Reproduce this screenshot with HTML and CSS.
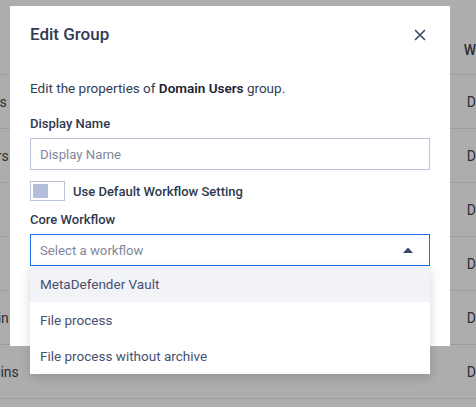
FILE: index.html
```html
<!DOCTYPE html>
<html>
<head>
<meta charset="utf-8">
<link rel="stylesheet" href="styles.css">
</head>
<body>
<div class="page">
  <div class="table">
    <div class="row head">
      <div class="c1"></div>
      <div class="c2">W</div>
    </div>
    <div class="row"><div class="c1 e1">Domain Users</div><div class="c2">D</div></div>
    <div class="row"><div class="c1 e2">Administrators</div><div class="c2">D</div></div>
    <div class="row"><div class="c1"></div><div class="c2">D</div></div>
    <div class="row"><div class="c1"></div><div class="c2">D</div></div>
    <div class="row"><div class="c1 e2">Domain Admin</div><div class="c2">D</div></div>
    <div class="row"><div class="c1 e3">Enterprise Admins</div><div class="c2">D</div></div>
  </div>

  <div class="modal">
    <div class="modal-header">
      <h2 class="title">Edit Group</h2>
      <svg class="close" width="12" height="12" viewBox="0 0 12 12"><path d="M1.5 1.5 L10.5 10.5 M10.5 1.5 L1.5 10.5" stroke="#3b4765" stroke-width="1.6" stroke-linecap="round"/></svg>
    </div>
    <div class="modal-body">
      <p class="intro">Edit the properties of <strong>Domain Users</strong> group.</p>
      <label class="label">Display Name</label>
      <div class="input"><span class="placeholder">Display Name</span></div>
      <div class="toggle-row">
        <span class="toggle"><span class="knob"></span></span>
        <span class="toggle-text">Use Default Workflow Setting</span>
      </div>
      <label class="label label-core">Core Workflow</label>
      <div class="select-wrap">
        <div class="select">
          <span class="placeholder">Select a workflow</span>
          <svg class="caret" width="10" height="6" viewBox="0 0 10 6"><path d="M0 6 L5 0.5 L10 6 Z" fill="#3a4766"/></svg>
        </div>
        <div class="dropdown">
          <div class="item active">MetaDefender Vault</div>
          <div class="item">File process</div>
          <div class="item">File process without archive</div>
        </div>
      </div>
    </div>
  </div>
</div>
</body>
</html>
```

FILE: styles.css
```css
* { box-sizing: border-box; }
html, body { margin: 0; padding: 0; }
body {
  width: 476px;
  height: 407px;
  overflow: hidden;
  background: #adadad;
  font-family: Roboto, "Liberation Sans", sans-serif;
}
.page {
  position: relative;
  width: 476px;
  height: 407px;
}
.table {
  display: flex;
  flex-direction: column;
}
.row {
  display: flex;
  align-items: center;
  height: 54px;
  border-bottom: 1px solid #9c9ca8;
  font-size: 14px;
  color: #2e2e33;
}
.row.head {
  height: 75px;
  align-items: flex-end;
  padding-bottom: 16px;
  font-weight: 500;
}
.c1 {
  width: 30px;
  display: flex;
  justify-content: flex-end;
  overflow: hidden;
  white-space: nowrap;
}
.c1.e1 { padding-right: 19px; }
.c1.e2 { padding-right: 17px; }
.c1.e3 { padding-right: 7px; }
.c2 {
  margin-left: 441px;
  white-space: nowrap;
}

.modal {
  position: absolute;
  left: 10px;
  top: 6px;
  width: 440px;
  height: 340px;
  background: #fff;
}
.modal-header {
  display: flex;
  align-items: center;
  justify-content: space-between;
  height: 55px;
  padding: 0 24px 0 20px;
}
.title {
  margin: 0;
  font-size: 17px;
  font-weight: 500;
  color: #2f3a56;
}
.close { display: block; margin-top: 2px; }
.modal-body {
  padding: 17px 20px 0 20px;
}
.intro {
  margin: 0;
  font-size: 13.5px;
  line-height: 20px;
  color: #333d55;
}
.intro strong { font-weight: 600; color: #1c2333; }
.label {
  display: block;
  margin-top: 17px;
  font-size: 13px;
  line-height: 18px;
  font-weight: 500;
  color: #2f3950;
}
.input {
  margin-top: 5px;
  height: 32px;
  border: 1px solid #b9c4d8;
  display: flex;
  align-items: center;
  padding: 0 9px;
}
.placeholder {
  font-size: 13.2px;
  color: #7f889c;
}
.toggle-row {
  display: flex;
  align-items: center;
  margin-top: 11px;
  gap: 8px;
}
.toggle {
  display: block;
  width: 35px;
  height: 20px;
  border: 1px solid #b9c4d8;
  padding: 2px;
}
.knob {
  display: block;
  width: 15px;
  height: 14px;
  background: #b3bedb;
}
.toggle-text {
  font-size: 13px;
  font-weight: 500;
  color: #2f3950;
}
.label-core { margin-top: 10px; }
.select-wrap {
  position: relative;
  margin-top: 5px;
}
.select {
  height: 32px;
  border: 1px solid #2070ee;
  display: flex;
  align-items: center;
  justify-content: space-between;
  padding: 0 16px 0 9px;
}
.caret { display: block; }
.dropdown {
  position: absolute;
  left: 0;
  right: 0;
  top: 100%;
  background: #fff;
  box-shadow: 0 3px 10px rgba(0, 0, 0, 0.16);
  z-index: 2;
}
.item {
  height: 36px;
  display: flex;
  align-items: center;
  padding: 0 10px;
  font-size: 13.5px;
  color: #465170;
}
.item.active { background: #f2f3f7; }
```
